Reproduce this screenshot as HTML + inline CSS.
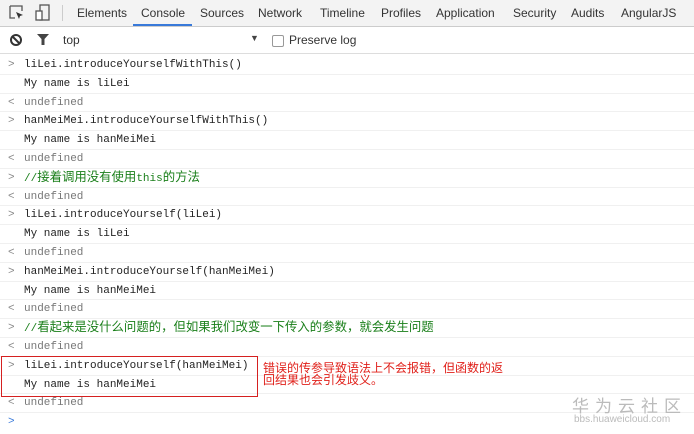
<!DOCTYPE html><html><head><meta charset="utf-8"><style>
body{margin:0;width:694px;height:434px;background:#fff;position:relative;overflow:hidden;font-family:"Liberation Sans","Noto Sans CJK SC",sans-serif}
.tb{position:absolute;left:0;top:0;width:694px;height:26px;background:#f3f3f3;border-bottom:1px solid #ccc}
.tab{position:absolute;top:6px;font-size:12px;color:#333}
.fb{position:absolute;left:0;top:27px;width:694px;height:26px;border-bottom:1px solid #ddd;background:#fff}
.r{position:absolute;left:0;width:694px;height:18.8px;border-bottom:1px solid #f0f0f0;font-family:"Liberation Mono","Noto Sans CJK SC",monospace;font-size:11px;line-height:20px;color:#222}
.r span.t{position:absolute;left:24px;top:0;white-space:nowrap}
.p{position:absolute;left:8px;top:0;color:#888;font-size:11px}
.g{color:#1a7f1a}
.g b{font-weight:normal;font-size:12.4px}
.u{color:#777}
</style></head><body>
<div class="tb">
<svg style="position:absolute;left:9px;top:5px" width="16" height="16"><path d="M1 1h12v5M1 1v12h5" stroke="#555" fill="none" stroke-width="1.3"/><path d="M7 7l7 3-3 1-1 3z" fill="#333"/></svg>
<svg style="position:absolute;left:35px;top:4px" width="16" height="18"><rect x="5" y="1" width="9" height="15" fill="none" stroke="#555" stroke-width="1.3"/><rect x="1" y="7" width="6" height="9" fill="#fff" stroke="#555" stroke-width="1.3"/></svg>
<div style="position:absolute;left:62px;top:5px;width:1px;height:16px;background:#ccc"></div>
<span class="tab" style="left:77px">Elements</span>
<span class="tab" style="left:141px">Console</span>
<div style="position:absolute;left:133px;top:24px;width:59px;height:2px;background:#3879d9"></div>
<span class="tab" style="left:200px">Sources</span>
<span class="tab" style="left:258px">Network</span>
<span class="tab" style="left:320px">Timeline</span>
<span class="tab" style="left:381px">Profiles</span>
<span class="tab" style="left:436px">Application</span>
<span class="tab" style="left:513px">Security</span>
<span class="tab" style="left:571px">Audits</span>
<span class="tab" style="left:621px">AngularJS</span>
</div>
<div class="fb">
<svg style="position:absolute;left:9px;top:6px" width="14" height="14"><circle cx="7" cy="7" r="5" fill="none" stroke="#333" stroke-width="2"/><path d="M3.5 3.5l7 7" stroke="#333" stroke-width="2"/></svg>
<svg style="position:absolute;left:36px;top:6px" width="14" height="14"><path d="M1 1h12l-4.5 5v6h-3v-6z" fill="#444"/></svg>
<span style="position:absolute;left:63px;top:6px;font-size:12px;color:#333">top</span>
<span style="position:absolute;left:250px;top:6px;font-size:9px;color:#444">▼</span>
<div style="position:absolute;left:272px;top:8px;width:10px;height:10px;border:1px solid #999;border-radius:2px"></div>
<span style="position:absolute;left:289px;top:6px;font-size:12px;color:#333">Preserve log</span>
</div>
<div class="r" style="top:55px"><span class="p">&gt;</span><span class="t">liLei.introduceYourselfWithThis()</span></div>
<div class="r" style="top:73.8px"><span class="t">My name is liLei</span></div>
<div class="r" style="top:92.6px"><span class="p">&lt;</span><span class="t u">undefined</span></div>
<div class="r" style="top:111.4px"><span class="p">&gt;</span><span class="t">hanMeiMei.introduceYourselfWithThis()</span></div>
<div class="r" style="top:130.2px"><span class="t">My name is hanMeiMei</span></div>
<div class="r" style="top:149px"><span class="p">&lt;</span><span class="t u">undefined</span></div>
<div class="r" style="top:167.8px"><span class="p">&gt;</span><span class="t g">//<b>接着调用没有使用</b>this<b>的方法</b></span></div>
<div class="r" style="top:186.6px"><span class="p">&lt;</span><span class="t u">undefined</span></div>
<div class="r" style="top:205.4px"><span class="p">&gt;</span><span class="t">liLei.introduceYourself(liLei)</span></div>
<div class="r" style="top:224.2px"><span class="t">My name is liLei</span></div>
<div class="r" style="top:243px"><span class="p">&lt;</span><span class="t u">undefined</span></div>
<div class="r" style="top:261.8px"><span class="p">&gt;</span><span class="t">hanMeiMei.introduceYourself(hanMeiMei)</span></div>
<div class="r" style="top:280.6px"><span class="t">My name is hanMeiMei</span></div>
<div class="r" style="top:299.4px"><span class="p">&lt;</span><span class="t u">undefined</span></div>
<div class="r" style="top:318.2px"><span class="p">&gt;</span><span class="t g">//<b>看起来是没什么问题的，但如果我们改变一下传入的参数，就会发生问题</b></span></div>
<div class="r" style="top:337px"><span class="p">&lt;</span><span class="t u">undefined</span></div>
<div class="r" style="top:355.8px"><span class="p">&gt;</span><span class="t">liLei.introduceYourself(hanMeiMei)</span></div>
<div class="r" style="top:374.6px"><span class="t">My name is hanMeiMei</span></div>
<div class="r" style="top:393.4px"><span class="p">&lt;</span><span class="t u">undefined</span></div>
<div class="r" style="top:412.2px;border:none"><span class="p" style="color:#3879d9">&gt;</span></div>
<div style="position:absolute;left:1px;top:356px;width:255px;height:39px;border:1px solid #d52020"></div>
<div style="position:absolute;left:263px;top:362px;font-size:12px;line-height:12px;color:#e0201a;white-space:nowrap">错误的传参导致语法上不会报错，但函数的返<br>回结果也会引发歧义。</div>
<div style="position:absolute;left:572px;top:392px;font-size:17px;letter-spacing:6px;color:#bbb;white-space:nowrap">华为云社区</div>
<div style="position:absolute;left:574px;top:414px;font-size:10px;color:#bbb;white-space:nowrap">bbs.huaweicloud.com</div>
</body></html>
